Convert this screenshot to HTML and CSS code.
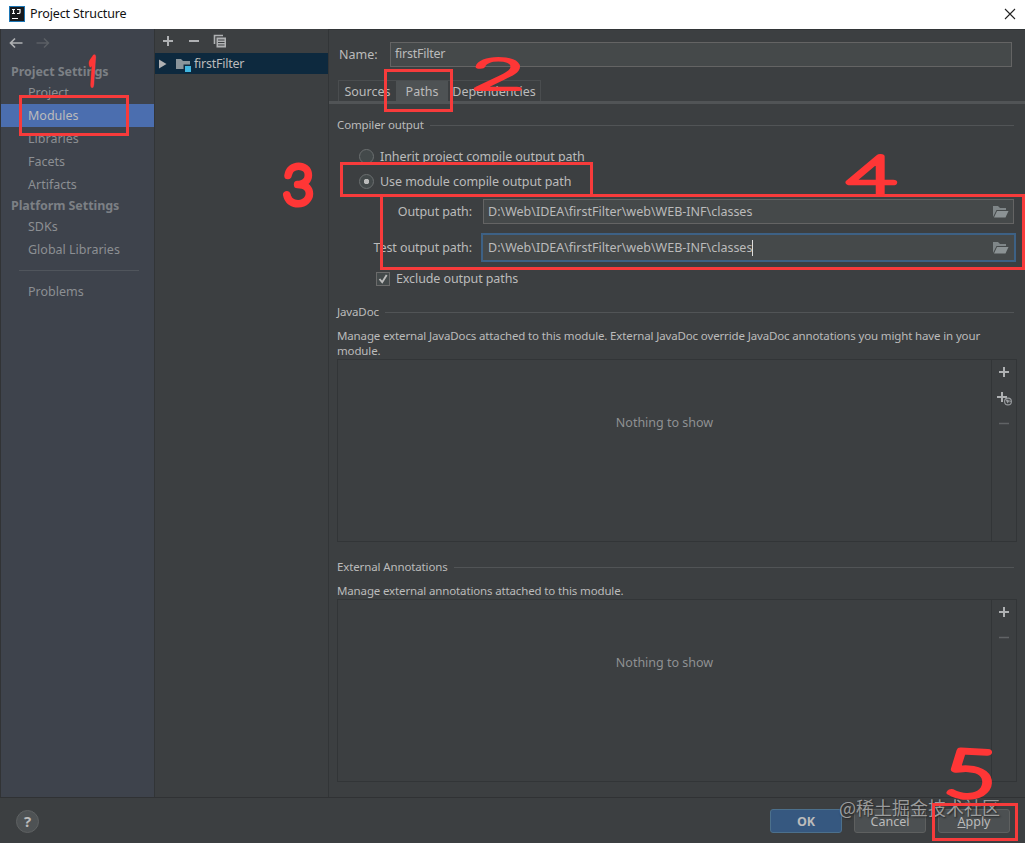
FILE: index.html
```html
<!DOCTYPE html>
<html lang="en">
<head>
	<meta charset="UTF-8">
	<title>Project Structure</title>
	<link rel="stylesheet" href="styles.css">
</head>
<body>
	<div class="dialog">
		<header class="titlebar">
			<svg class="logo" width="16" height="16" viewBox="0 0 16 16">
				<rect width="16" height="16" fill="#1c76b5"/>
				<rect x="1" y="1" width="14" height="14" fill="#17191c"/>
				<path d="M3 3.5h3M4.5 3.5v4M3 7.5h3M8 3.5h3V6.500Q11 7.500 9.500 7.500H8M3 12.500h6" fill="none" stroke="#fff" stroke-width="1.2"/>
			</svg>
			<h1>Project Structure</h1>
			<svg class="close" width="12" height="12" viewBox="0 0 12 12"><path d="M1 1l10 10M11 1L1 11" stroke="#222" stroke-width="1.1"/></svg>
		</header>

		<div class="content">
			<nav class="sidebar">
				<div class="history">
					<svg width="14" height="12" viewBox="0 0 14 12"><path d="M13.500 6H2M6 1.500L1.500 6L6 10.500" fill="none" stroke="#afb1b3" stroke-width="1.7"/></svg>
					<svg width="14" height="12" viewBox="0 0 14 12"><path d="M.5 6H12M8 1.500L12.500 6L8 10.500" fill="none" stroke="#5b5f64" stroke-width="1.500"/></svg>
				</div>
				<h2>Project Settings</h2>
				<a>Project</a>
				<a class="active">Modules</a>
				<a>Libraries</a>
				<a>Facets</a>
				<a>Artifacts</a>
				<h2>Platform Settings</h2>
				<a>SDKs</a>
				<a>Global Libraries</a>
				<hr>
				<a>Problems</a>
			</nav>

			<section class="modules">
				<div class="toolbar">
					<svg width="12" height="12" viewBox="0 0 12 12"><path d="M6 1v10M1 6h10" stroke="#afb1b3" stroke-width="2"/></svg>
					<svg width="12" height="12" viewBox="0 0 12 12"><path d="M1 6h10" stroke="#afb1b3" stroke-width="2"/></svg>
					<svg width="14" height="14" viewBox="0 0 14 14"><path d="M1.500 10V1.500H10" fill="none" stroke="#afb1b3" stroke-width="1.600"/><path fill="#afb1b3" fill-rule="evenodd" d="M3.500 3.500h9.500v10h-9.500zM5 5.500v1h6.500v-1zM5 8v1h6.500v-1zM5 10.500v1h6.500v-1z"/></svg>
				</div>
				<div class="module">
					<svg width="8" height="10" viewBox="0 0 8 10"><path d="M0 .5l7.500 4.500L0 9.500z" fill="#afb1b3"/></svg>
					<svg class="folder" width="17" height="15" viewBox="0 0 17 15"><path d="M1 2h5l2 2h7v8H1z" fill="#8a959b"/><path d="M8.500 7.500H17V15H8.500z" fill="#0d293e"/><path d="M10 9h6v6h-6z" fill="#40b6e0"/></svg>
					<span>firstFilter</span>
				</div>
			</section>

			<main>
				<div class="name-row">
					<label>Name:</label>
					<div class="field">firstFilter</div>
				</div>
				<div class="tabs">
					<span class="tab sources">Sources</span>
					<span class="tab selected">Paths</span>
					<span class="tab deps">Dependencies</span>
				</div>

				<h3 class="compiler"><span>Compiler output</span></h3>
				<div class="radio">
					<i></i><span class="inherit">Inherit project compile output path</span>
				</div>
				<div class="radio checked">
					<i></i><span>Use module compile output path</span>
				</div>
				<div class="path-row">
					<label>Output path:</label>
					<div class="field">
						<span>D:\Web\IDEA\firstFilter\web\WEB-INF\classes</span>
						<svg width="16" height="12" viewBox="0 0 16 12"><path d="M0 11V0h5l2 2h6v2H3.500z" fill="#7f8688"/><path d="M4 5h11.500l-3 6.500H1z" fill="#8b9294"/></svg>
					</div>
				</div>
				<div class="path-row focused">
					<label>Test output path:</label>
					<div class="field">
						<span class="caret">D:\Web\IDEA\firstFilter\web\WEB-INF\classes</span>
						<svg width="16" height="12" viewBox="0 0 16 12"><path d="M0 11V0h5l2 2h6v2H3.500z" fill="#7f8688"/><path d="M4 5h11.500l-3 6.500H1z" fill="#8b9294"/></svg>
					</div>
				</div>
				<div class="check">
					<svg width="14" height="14" viewBox="0 0 14 14"><rect x=".5" y=".5" width="13" height="13" fill="#43494a" stroke="#6b6b6b"/><path d="M3.500 7l2.700 3.200L10.700 3" fill="none" stroke="#bbb" stroke-width="1.900"/></svg>
					<span>Exclude output paths</span>
				</div>

				<h3><span>JavaDoc</span></h3>
				<p>Manage external JavaDocs attached to this module. External JavaDoc override JavaDoc annotations you might have in your<br>module.</p>
				<div class="list">
					<div class="empty">Nothing to show</div>
					<div class="actions">
						<svg width="16" height="16" viewBox="0 0 16 16"><path d="M8 3v10M3 8h10" stroke="#afb1b3" stroke-width="2"/></svg>
						<svg width="16" height="16" viewBox="0 0 16 16"><path d="M6 2v10M1 7h10" stroke="#afb1b3" stroke-width="2"/><circle cx="12" cy="11.500" r="3.400" fill="#3c3f41" stroke="#9a9da0" stroke-width="1.100"/><path d="M9.500 9.500l3 .3.500 1.700-1.500 2zM13.500 9.500l1.500 2-1.500 1z" fill="#9a9da0"/></svg>
						<svg width="16" height="16" viewBox="0 0 16 16"><path d="M3 7.500h10" stroke="#606365" stroke-width="1.500"/></svg>
					</div>
				</div>

				<h3><span>External Annotations</span></h3>
				<p>Manage external annotations attached to this module.</p>
				<div class="list">
					<div class="empty">Nothing to show</div>
					<div class="actions">
						<svg width="16" height="16" viewBox="0 0 16 16"><path d="M8 3v10M3 8h10" stroke="#afb1b3" stroke-width="2"/></svg>
						<svg width="16" height="16" viewBox="0 0 16 16"><path d="M3 7.500h10" stroke="#606365" stroke-width="1.500"/></svg>
					</div>
				</div>
			</main>
		</div>

		<footer>
			<span class="help">?</span>
			<button class="primary">OK</button>
			<button>Cancel</button>
			<button><u>A</u>pply</button>
		</footer>

		<div class="watermark">@稀土掘金技术社区</div>

		<!-- red step markers over the dialog -->
		<svg class="marks" width="1025" height="843" viewBox="0 0 1025 843">
			<g class="boxes">
				<rect x="20.500" y="96.500" width="107" height="38"/>
				<rect x="385.500" y="70.500" width="66" height="40"/>
				<rect x="341.500" y="163.500" width="250" height="32"/>
				<rect x="381.500" y="195.500" width="642" height="73"/>
				<rect x="933.500" y="804.500" width="83" height="35"/>
			</g>
			<g class="numbers">
				<text class="one" transform="translate(87 84) rotate(4) scale(.3 .7)">1</text>
				<text transform="translate(472 89) scale(1.700 .8)">2</text>
				<text class="three" transform="translate(283 204)">3</text>
				<text transform="translate(847 194) scale(1.600 1.030)">4</text>
				<text transform="translate(943 795) rotate(3) scale(1.700 1.220)">5</text>
			</g>
		</svg>
	</div>
</body>
</html>
```
FILE: styles.css
```css
* {
	box-sizing: border-box;
}
body {
	margin: 0;
	background: #3c3f41;
	color: #bbb;
	font-family: "Noto Sans", "Noto Sans CJK SC", sans-serif;
	font-size: 12.5px;
	line-height: 16px;
}
h1, h2, h3, p {
	margin: 0;
	font-weight: normal;
}
svg {
	display: block;
	flex: none;
}
.dialog {
	position: relative;
	width: 1025px;
	height: 843px;
	overflow: hidden;
	display: flex;
	flex-direction: column;
}
.titlebar {
	height: 29px;
	background: #fff;
	color: #111;
	display: flex;
	align-items: center;
	padding: 0 9px 2px;
}
.titlebar h1 {
	font-size: 12.5px;
	letter-spacing: -0.12px;
	margin-left: 5px;
}
.close {
	margin-left: auto;
}
.content {
	display: flex;
	height: 768px;
}

/* left navigation */
.sidebar {
	width: 155px;
	background: #3e434c;
	border-left: 1px solid #313335;
	border-right: 1px solid #323537;
	color: #8c8f93;
}
.history {
	height: 33px;
	display: flex;
	gap: 13px;
	padding: 8px 0 0 8px;
}
.sidebar h2 {
	height: 19px;
	line-height: 20px;
	padding-left: 10px;
	font-size: 12.5px;
	letter-spacing: -0.06px;
	font-weight: bold;
	color: #7c8085;
}
.sidebar a {
	display: block;
	height: 23px;
	line-height: 24px;
	padding-left: 27px;
}
.sidebar a.active {
	background: #4b6eaf;
	color: #bbb;
}
.sidebar hr {
	height: 1px;
	border: 0;
	margin: 9px 15px 9px 18px;
	background: #50555c;
}

/* module list */
.modules {
	width: 174px;
	border-right: 1px solid #323537;
}
.toolbar {
	height: 24px;
	display: flex;
	align-items: center;
	gap: 14px;
	padding-left: 7px;
}
.toolbar svg:last-child {
	margin-left: -1px;
}
.module {
	height: 21px;
	background: #0d293e;
	display: flex;
	align-items: center;
	padding-left: 4px;
	letter-spacing: -0.25px;
}
.folder {
	margin: 2px 2px 0 8px;
}

/* settings page */
main {
	flex: 1;
	min-width: 0;
	border-top: 1px solid #323537;
}
.field {
	height: 25px;
	border: 1px solid #646464;
	background: #45494a;
	padding: 0 4px;
	display: flex;
	align-items: center;
	justify-content: space-between;
}
.name-row {
	display: flex;
	align-items: center;
	padding: 12px 13px 0 10px;
}
.name-row label {
	width: 51px;
}
.name-row .field {
	flex: 1;
	padding-bottom: 2px;
	letter-spacing: -0.25px;
}
.tabs {
	height: 37px;
	padding: 13px 0 0 9px;
	border-bottom: 3px solid #515456;
	display: flex;
}
.tab {
	height: 21px;
	line-height: 22px;
	border-top: 1px solid #4a4d4f;
	text-align: center;
	white-space: nowrap;
}
.tab.sources {
	width: 58px;
	border-left: 1px solid #4a4d4f;
}
.tab.selected {
	width: 52px;
	background: #4e5254;
}
.tab.deps {
	width: 93px;
	border-right: 1px solid #4a4d4f;
}
h3 {
	height: 16px;
	margin: 17px 11px 0 8px;
	font-size: 11.5px;
	letter-spacing: -0.13px;
	display: flex;
	align-items: center;
	gap: 6px;
}
h3::after {
	content: '';
	flex: 1;
	height: 1px;
	background: #515456;
}
h3.compiler {
	margin-top: 13px;
	margin-bottom: 11px;
}
.radio {
	height: 25px;
	display: flex;
	align-items: center;
	gap: 6px;
	padding-left: 30px;
}
.radio span {
	letter-spacing: -0.06px;
}
.radio i {
	width: 15px;
	height: 15px;
	border: 1px solid #6b6f70;
	border-radius: 50%;
	background: #43494a;
}
.radio.checked i {
	background: radial-gradient(circle, #bbb 2.5px, #43494a 3px);
}
.path-row {
	display: flex;
	align-items: center;
	margin-top: 5px;
	padding-right: 11px;
}
.path-row label {
	width: 143px;
	margin-right: 11px;
	text-align: right;
	letter-spacing: -0.1px;
}
.path-row .field {
	flex: 1;
}
.focused {
	margin-top: 9px;
	padding-right: 9px;
}
.focused label {
	margin-right: 9px;
}
.focused .field {
	height: 29px;
	border: 2px solid #3d6185;
	padding: 0 5px;
}
.caret {
	border-right: 1px solid #ddd;
}
.check {
	display: flex;
	align-items: center;
	gap: 6px;
	height: 16px;
	margin-top: 9px;
	padding-left: 47px;
	letter-spacing: -0.1px;
}
p {
	margin: 8px 0 0 8px;
	font-size: 11.5px;
	letter-spacing: -0.14px;
	line-height: 15px;
	white-space: nowrap;
}
.list {
	height: 183px;
	margin: 1px 8px 0 8px;
	border: 1px solid #323537;
	display: flex;
}
.empty {
	flex: 1;
	padding-top: 55px;
	text-align: center;
	color: #8f9193;
}
.actions {
	width: 25px;
	border-left: 1px solid #323537;
	padding: 4px 0 0 4px;
	display: flex;
	flex-direction: column;
	gap: 10px;
}

footer {
	height: 46px;
	border-top: 1px solid #303234;
	display: flex;
	align-items: center;
	gap: 12px;
	padding: 1px 15px 0 16px;
}
.help {
	width: 23px;
	height: 23px;
	margin-right: auto;
	border: 1px solid #5e6162;
	border-radius: 50%;
	background: #4e5254;
	text-align: center;
	line-height: 21px;
	font-size: 15px;
	font-weight: bold;
}
footer button {
	width: 72px;
	height: 24px;
	padding: 2px 0 0;
	border: 1px solid #5e6060;
	border-radius: 3px;
	background: #4c5052;
	color: #bbb;
	font: inherit;
}
footer .primary {
	border-color: #4c708c;
	background: #365880;
	font-weight: bold;
}

.watermark {
	position: absolute;
	left: 839px;
	top: 795px;
	font-family: "Noto Sans CJK SC", sans-serif;
	font-size: 18px;
	line-height: 24px;
	color: rgba(190, 190, 190, 0.75);
	text-shadow: 1px 1px 2px #222;
	white-space: nowrap;
}
.marks {
	position: absolute;
	left: 0;
	top: 0;
}
.boxes rect {
	fill: none;
	stroke: #f73b3b;
	stroke-width: 3;
}
.numbers text {
	font-family: Lato, sans-serif;
	font-size: 53px;
	font-weight: 100;
	fill: #ff3636;
	stroke: #ff3636;
	stroke-width: 5px;
	stroke-linejoin: round;
}
.numbers .one {
	font-family: "Noto Sans", sans-serif;
	stroke-width: 10px;
}
.numbers .three {
	stroke-width: 7px;
}
```
